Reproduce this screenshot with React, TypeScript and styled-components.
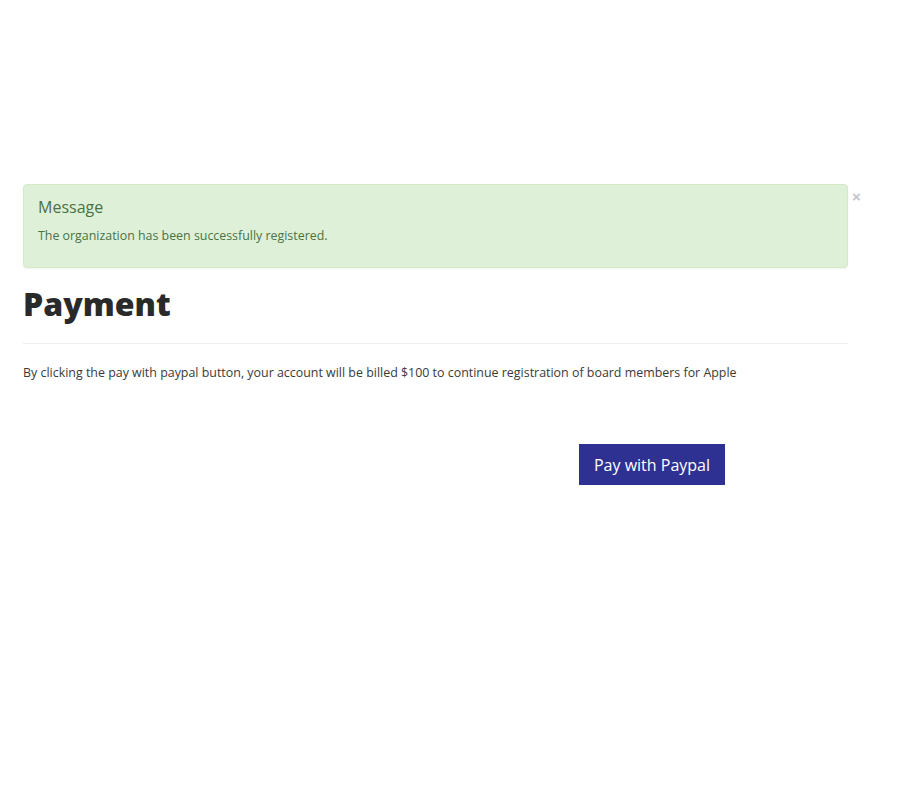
import React from "react";
import styled, { createGlobalStyle } from "styled-components";

const Global = createGlobalStyle`
  html, body { margin: 0; padding: 0; background: #fff; }
  body { font-family: "Open Sans", "Liberation Sans", sans-serif; color: #333; }
`;

const Page = styled.div`
  padding: 184px 0 0 23px;
  width: 825px;
`;

const AlertRow = styled.div`
  display: flex;
  align-items: flex-start;
  width: 845px;
`;

const Alert = styled.div`
  box-sizing: border-box;
  width: 825px;
  height: 84px;
  padding: 12px 14px;
  background: #dff0d8;
  border: 1px solid #d6e9c6;
  border-radius: 4px;
  color: #4a7245;
  box-shadow: 0 1px 2px rgba(0, 0, 0, 0.05);
`;

const AlertTitle = styled.div`
  font-size: 16px;
  line-height: 20px;
  margin-bottom: 10px;
`;

const AlertText = styled.div`
  font-size: 12.4px;
  line-height: 18px;
`;

const Close = styled.button`
  border: 0;
  background: none;
  padding: 0;
  margin: 6px 0 0 4px;
  font-family: "Liberation Sans", sans-serif;
  font-size: 15px;
  font-weight: bold;
  line-height: 14px;
  color: #c4c4cc;
  cursor: pointer;
`;

const Heading = styled.h1`
  margin: 16px 0 0;
  font-size: 32px;
  font-weight: 800;
  line-height: 40px;
  color: #2a2a2a;
`;

const Rule = styled.hr`
  margin: 19px 0 0;
  border: 0;
  border-top: 1px solid #eee;
`;

const Lead = styled.p`
  margin: 20px 0 0;
  font-size: 12.43px;
  line-height: 18px;
  color: #3a3a3a;
  white-space: nowrap;
`;

const Actions = styled.div`
  display: flex;
  padding: 62px 0 0 556px;
`;

const PayButton = styled.button`
  box-sizing: border-box;
  width: 146px;
  height: 41px;
  border: 0;
  background: #2e3192;
  color: #fff;
  font-family: "Open Sans", "Liberation Sans", sans-serif;
  font-size: 16px;
  cursor: pointer;
`;

export default function App() {
  return (
    <>
      <Global />
      <Page>
        <AlertRow>
          <Alert>
            <AlertTitle>Message</AlertTitle>
            <AlertText>The organization has been successfully registered.</AlertText>
          </Alert>
          <Close aria-label="Close">×</Close>
        </AlertRow>
        <Heading>Payment</Heading>
        <Rule />
        <Lead>
          By clicking the pay with paypal button, your account will be billed $100 to continue
          registration of board members for Apple
        </Lead>
        <Actions>
          <PayButton>Pay with Paypal</PayButton>
        </Actions>
      </Page>
    </>
  );
}
